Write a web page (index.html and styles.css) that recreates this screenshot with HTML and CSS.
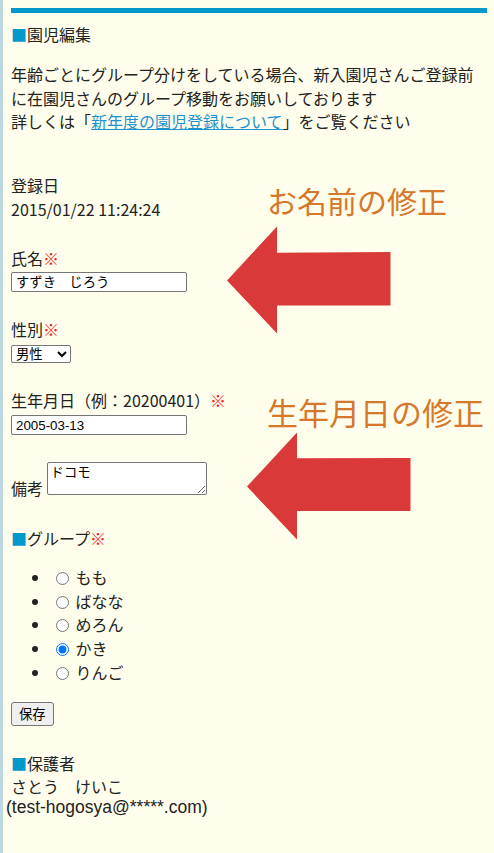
FILE: index.html
```
<!DOCTYPE html>
<html lang="ja">
<head>
    <meta charset="UTF-8">
    <meta name="viewport" content="width=device-width, initial-scale=1.0">
    <title>園児編集</title>
    <link rel="stylesheet" href="styles.css">
</head>
<body>
    <div class="page">
        <div class="content">
            <h2 class="heading"><span class="sq">■</span>園児編集</h2>
            <p class="lead">年齢ごとにグループ分けをしている場合、新入園児さんご登録前に在園児さんのグループ移動をお願いしております<br>詳しくは「<a href="#">新年度の園児登録について</a>」をご覧ください</p>

            <div class="field first">
                <div>登録日</div>
                <div>2015/01/22 11:24:24</div>
            </div>

            <form autocomplete="off">
                <div class="field">
                    <label>氏名<span class="req">※</span></label>
                    <input type="text" class="text-input" value="すずき　じろう">
                </div>

                <div class="field">
                    <label>性別<span class="req">※</span></label>
                    <select class="select">
                        <option selected>男性</option>
                        <option>女性</option>
                    </select>
                </div>

                <div class="field">
                    <label>生年月日（例：20200401）<span class="req">※</span></label>
                    <input type="text" class="text-input birth" value="2005-03-13">
                </div>

                <div class="field memo">
                    <label>備考</label> <textarea class="note">ドコモ</textarea>
                </div>

                <h2 class="heading group-title"><span class="sq">■</span>グループ<span class="req">※</span></h2>
                <ul class="groups">
                    <li><input type="radio" name="group"> もも</li>
                    <li><input type="radio" name="group"> ばなな</li>
                    <li><input type="radio" name="group"> めろん</li>
                    <li><input type="radio" name="group" checked> かき</li>
                    <li><input type="radio" name="group"> りんご</li>
                </ul>

                <button type="button" class="save">保存</button>
            </form>

            <h2 class="heading guardian-title"><span class="sq">■</span>保護者</h2>
            <div>さとう　けいこ</div>
            <div class="email">(test-hogosya@*****.com)</div>
        </div>

        <!-- 注釈（スクリーンショット上の書き込み） -->
        <div class="note-text note-name">お名前の修正</div>
        <svg class="arrow arrow-name" width="166" height="109" viewBox="0 0 166 109">
            <polygon points="1,54.5 51,0.5 51,26.8 164.5,26 164.5,79.5 51,79.5 51,107.5" fill="#d93939"/>
        </svg>
        <div class="note-text note-birth">生年月日の修正</div>
        <svg class="arrow arrow-birth" width="166" height="109" viewBox="0 0 166 109">
            <polygon points="1,54.5 51,0.5 51,26.3 164.5,26 164.5,79 51,79 51,107.5" fill="#d93939"/>
        </svg>
    </div>
</body>
</html>
```

FILE: styles.css
```
html, body { margin: 0; padding: 0; background: #fffeec; }
body { font-family: "Noto Sans CJK JP", "Noto Sans", sans-serif; font-size: 16px; line-height: 1.46; color: #222; }

.page { position: relative; min-height: 853px; box-sizing: border-box; border-left: 3px solid #bcd9e2; padding: 8px 7px 20px 4px; }
.content { margin-left: 4px; border-top: 5px solid #0099cc; padding-top: 10px; }

.heading { font-size: 16px; font-weight: normal; margin: 0; }
.sq { color: #0099cc; }
.req { color: #e8231f; }

.lead { margin: 17px 0 0; }
.lead a { color: #1b93cf; }

.field { margin-top: 26px; }
.field.first { margin-top: 41px; }
.field label { display: block; }
.field.memo { margin-top: 27px; }
.field.memo label { display: inline; }

.text-input { display: block; box-sizing: border-box; width: 176px; height: 20px; margin: 1px 0 0; padding: 0 4px; border: 1px solid #767676; border-radius: 2px; background: #fff; font: 13.33px "Liberation Sans", "Noto Sans CJK JP", sans-serif; color: #000; }
.text-input.birth { margin-top: 3px; }
.select { display: block; box-sizing: border-box; width: 60px; height: 18px; margin: 4px 0 0; border: 1px solid #767676; border-radius: 2px; background: #fff; font: 13.33px "Liberation Sans", "Noto Sans CJK JP", sans-serif; color: #000; }
.note { box-sizing: border-box; width: 160px; height: 33px; margin: 0; padding: 2px 3px; border: 1px solid #767676; border-radius: 2px; background: #fff; font: 13.33px "Noto Sans CJK JP", monospace; line-height: 1.1; vertical-align: baseline; }

.group-title { margin-top: 26px; }
.groups { margin: 16px 0 0; padding-left: 40px; }
.groups li { line-height: 23.75px; }
.groups input { margin: 0 3px 0 5px; vertical-align: -1px; }

.save { margin-top: 17px; box-sizing: border-box; height: 24px; padding: 0 7px; border: 1px solid #767676; border-radius: 3px; background: #efefef; font: 13.33px "Noto Sans CJK JP", sans-serif; color: #000; }

.guardian-title { margin-top: 26px; }
.email { margin-left: -5px; font-family: "Liberation Sans", Arial, sans-serif; font-size: 17.5px; line-height: 18px; }

.note-text { position: absolute; left: 264px; color: #d5782c; line-height: 1; white-space: nowrap; }
.note-name { top: 185px; font-size: 30px; }
.note-birth { top: 396px; font-size: 31px; }
.arrow { position: absolute; }
.arrow-name { left: 223px; top: 226px; }
.arrow-birth { left: 243px; top: 432px; }
```
